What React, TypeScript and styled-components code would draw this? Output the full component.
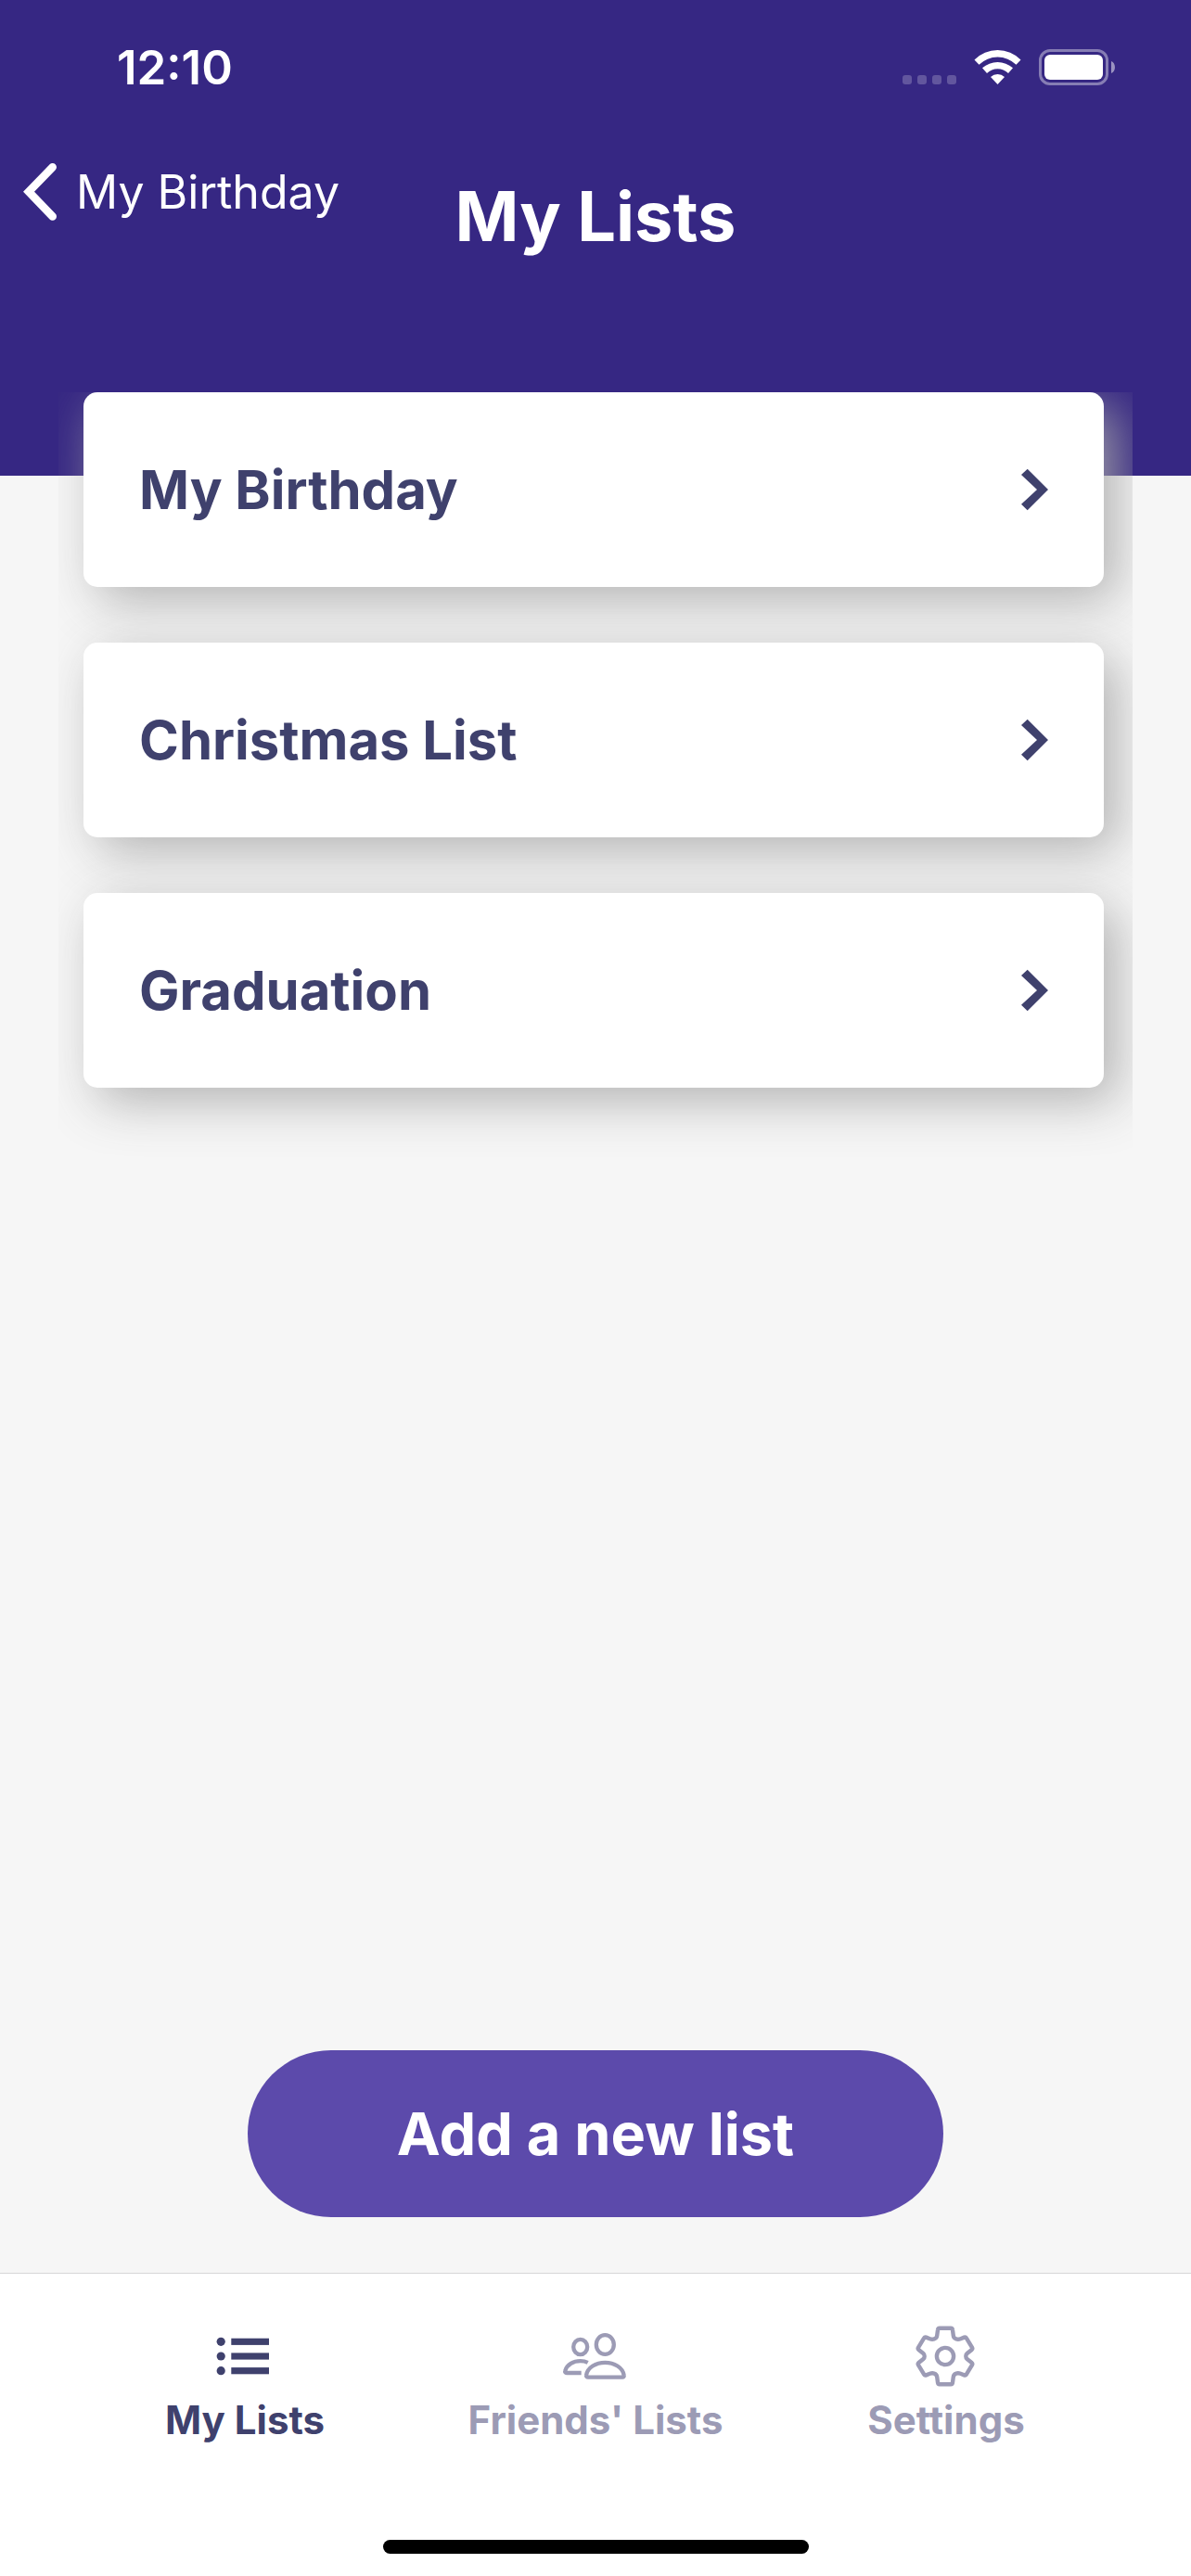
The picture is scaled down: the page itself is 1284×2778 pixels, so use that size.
import React from 'react';
import styled, { createGlobalStyle } from 'styled-components';

const color = {
  header: '#362783',
  page: '#f6f6f6',
  ink: '#3f416d',
  muted: '#9c9bb5',
  accent: '#5c4aab',
};

const GlobalStyle = createGlobalStyle`
  * { box-sizing: border-box; }
  body {
    margin: 0;
    background: ${color.page};
    font-family: Inter, "Liberation Sans", sans-serif;
  }
  h1, ul { margin: 0; padding: 0; }
  svg { display: block; flex: none; }
`;

const Screen = styled.div`
  display: flex;
  flex-direction: column;
  min-height: 100vh;
  background: ${color.page};
`;

const Header = styled.header`
  height: 513px;
  background: ${color.header};
  color: #fff;
`;

const StatusBar = styled.div`
  display: flex;
  align-items: center;
  justify-content: space-between;
  height: 132px;
  padding: 13px 82px 0 126px;
`;

const Clock = styled.time`
  font-size: 51px;
  line-height: 60px;
  font-weight: 600;
`;

const StatusIcons = styled.div`
  display: flex;
  gap: 19px;
`;

const NavBar = styled.div`
  display: grid;
  grid-template-columns: 1fr auto 1fr;
  align-items: start;
  padding: 43px 24px 0;
`;

const BackButton = styled.button`
  display: flex;
  align-items: center;
  justify-self: start;
  gap: 18px;
  height: 64px;
  padding: 0;
  border: 0;
  background: none;
  color: inherit;
  font: 400 50px/64px Inter, "Liberation Sans", sans-serif;
`;

const Title = styled.h1`
  padding-top: 13px;
  font-size: 74px;
  line-height: 90px;
  font-weight: 700;
`;

const Main = styled.main`
  display: flex;
  flex: 1;
  flex-direction: column;
  margin-top: -90px;
`;

const Lists = styled.ul`
  display: flex;
  flex: 1;
  flex-direction: column;
  gap: 60px;
  margin: 0 63px;
  padding: 0 31px 90px 27px;
  overflow: hidden;
  list-style: none;
`;

const ListCard = styled.button`
  display: flex;
  align-items: center;
  justify-content: space-between;
  width: 100%;
  height: 210px;
  padding: 0 60px;
  border: 0;
  border-radius: 15px;
  background: #fff;
  box-shadow: 15px 15px 54px rgba(170, 170, 170, 0.88);
  color: ${color.ink};
  font: 700 58px/72px Inter, "Liberation Sans", sans-serif;
`;

const AddButton = styled.button`
  align-self: center;
  width: 750px;
  max-width: 90%;
  height: 180px;
  margin-bottom: 60px;
  border: 0;
  border-radius: 90px;
  background: ${color.accent};
  color: #fff;
  font: 700 63px/78px Inter, "Liberation Sans", sans-serif;
`;

const Footer = styled.footer`
  display: flex;
  flex-direction: column;
  align-items: center;
  gap: 104px;
  padding: 51px 0 24px;
  border-top: 1px solid #d6d6d8;
  background: #fff;
`;

const Tabs = styled.nav`
  display: flex;
  align-self: stretch;
  padding: 0 75px;
`;

const Tab = styled.button<{ $active?: boolean }>`
  display: flex;
  flex: 1;
  flex-direction: column;
  align-items: center;
  gap: 6px;
  padding: 0;
  border: 0;
  background: none;
  color: ${(p) => (p.$active ? color.ink : color.muted)};
  font: 700 42px/50px Inter, "Liberation Sans", sans-serif;
`;

const HomeIndicator = styled.div`
  width: 459px;
  height: 15px;
  border-radius: 8px;
  background: #000;
`;

const SignalIcon = () => (
  <svg width="58" height="39" viewBox="0 0 58 39" fill="#fff" fillOpacity="0.22" aria-hidden="true">
    {[0, 16, 32, 48].map((x) => (
      <rect key={x} x={x} y="28" width="10" height="10" rx="3" />
    ))}
  </svg>
);

const WifiIcon = () => (
  <svg width="51" height="39" viewBox="0 0 51 39" fill="#fff" aria-hidden="true">
    <path d="M.5 11.5A35 35 0 0 1 50.5 11.5L45.5 16.7A28.5 28.5 0 0 0 5.5 16.7Z" />
    <path d="M9 20.3A24.8 24.8 0 0 1 42 20.3L37 26A16.5 16.5 0 0 0 14 26Z" />
    <path d="M18 29.9A11 11 0 0 1 33 29.9L25.5 38Z" />
  </svg>
);

const BatteryIcon = () => (
  <svg width="82" height="39" viewBox="0 0 82 39" fill="#fff" aria-hidden="true">
    <rect x="1.5" y="1.5" width="72" height="36" rx="10.5" fill="none" stroke="#fff" strokeOpacity="0.4" strokeWidth="3" />
    <rect x="6" y="6" width="63" height="27" rx="6" />
    <path d="M78 13C83.3 15 83.3 24 78 26Z" fillOpacity="0.5" />
  </svg>
);

const BackIcon = () => (
  <svg width="40" height="64" viewBox="0 0 40 64" fill="none" stroke="currentColor" strokeWidth="8.6" strokeLinecap="round" aria-hidden="true">
    <path d="M32.7 5.3L7 31.7L32.7 58.5" />
  </svg>
);

const ForwardIcon = () => (
  <svg width="29" height="46" viewBox="0 0 29 46" fill="currentColor" aria-hidden="true">
    <path d="M6.7 .7L29 23L6.7 45.3L0 38.7L17 23L0 7Z" />
  </svg>
);

const ListIcon = () => (
  <svg width="76" height="76" viewBox="0 0 76 76" fill="currentColor" aria-hidden="true">
    {[22.3, 38, 53.7].map((y) => (
      <g key={y}>
        <circle cx="12.2" cy={y} r="4.6" />
        <rect x="23.3" y={y - 3.6} width="40.7" height="7.2" />
      </g>
    ))}
  </svg>
);

const FriendsIcon = () => (
  <svg width="76" height="76" viewBox="0 0 76 76" fill="none" stroke="currentColor" strokeWidth="4.3" aria-hidden="true">
    <ellipse cx="48.3" cy="25.5" rx="9.5" ry="10.4" />
    <ellipse cx="21.7" cy="28" rx="7.5" ry="8.2" />
    <path d="M30 60.6H67c1.3 0 1.9-.8 1.7-2C67.5 50 58 44.8 48.3 44.8S29.2 50 28 58.6c-.2 1.2.6 2 2 2Z" />
    <path d="M22.7 56H7c-1.6 0-2.2-1-1.7-2.4C7.3 47 14 43.2 21.7 43.2c3 0 5.6.5 8 1.7" />
  </svg>
);

const GearIcon = () => (
  <svg width="76" height="76" viewBox="0 0 76 76" fill="none" stroke="currentColor" strokeWidth="4.4" aria-hidden="true">
    <circle cx="37" cy="38" r="9.1" />
    <path d="M31 7.8H43Q44.8 7.8 45 9.8L45.8 15.8Q46.2 18.6 48.8 19.4Q51 20.2 53.5 19.2L57.5 17.6Q59 17 59.8 18.4L66 28.5Q66.8 30 65.6 31L60.6 35Q59.3 36 59.3 38Q59.3 40 60.6 41L65.6 45Q66.8 46 66 47.5L59.8 57.6Q59 59 57.5 58.4L53.5 56.8Q51 55.8 48.8 56.6Q46.2 57.4 45.8 60.2L45 66.2Q44.8 68.2 43 68.2H31Q29.2 68.2 29 66.2L28.2 60.2Q27.8 57.4 25.2 56.6Q23 55.8 20.5 56.8L16.5 58.4Q15 59 14.2 57.6L8 47.5Q7.2 46 8.4 45L13.4 41Q14.7 40 14.7 38Q14.7 36 13.4 35L8.4 31Q7.2 30 8 28.5L14.2 18.4Q15 17 16.5 17.6L20.5 19.2Q23 20.2 25.2 19.4Q27.8 18.6 28.2 15.8L29 9.8Q29.2 7.8 31 7.8Z" />
  </svg>
);

const lists = ['My Birthday', 'Christmas List', 'Graduation'];

export default function App() {
  return (
    <Screen>
      <GlobalStyle />
      <Header>
        <StatusBar>
          <Clock>12:10</Clock>
          <StatusIcons>
            <SignalIcon />
            <WifiIcon />
            <BatteryIcon />
          </StatusIcons>
        </StatusBar>
        <NavBar>
          <BackButton type="button">
            <BackIcon />
            My Birthday
          </BackButton>
          <Title>My Lists</Title>
        </NavBar>
      </Header>
      <Main>
        <Lists>
          {lists.map((name) => (
            <li key={name}>
              <ListCard type="button">
                {name}
                <ForwardIcon />
              </ListCard>
            </li>
          ))}
        </Lists>
        <AddButton type="button">Add a new list</AddButton>
      </Main>
      <Footer>
        <Tabs>
          <Tab type="button" $active aria-current="page">
            <ListIcon />
            My Lists
          </Tab>
          <Tab type="button">
            <FriendsIcon />
            Friends' Lists
          </Tab>
          <Tab type="button">
            <GearIcon />
            Settings
          </Tab>
        </Tabs>
        <HomeIndicator />
      </Footer>
    </Screen>
  );
}
